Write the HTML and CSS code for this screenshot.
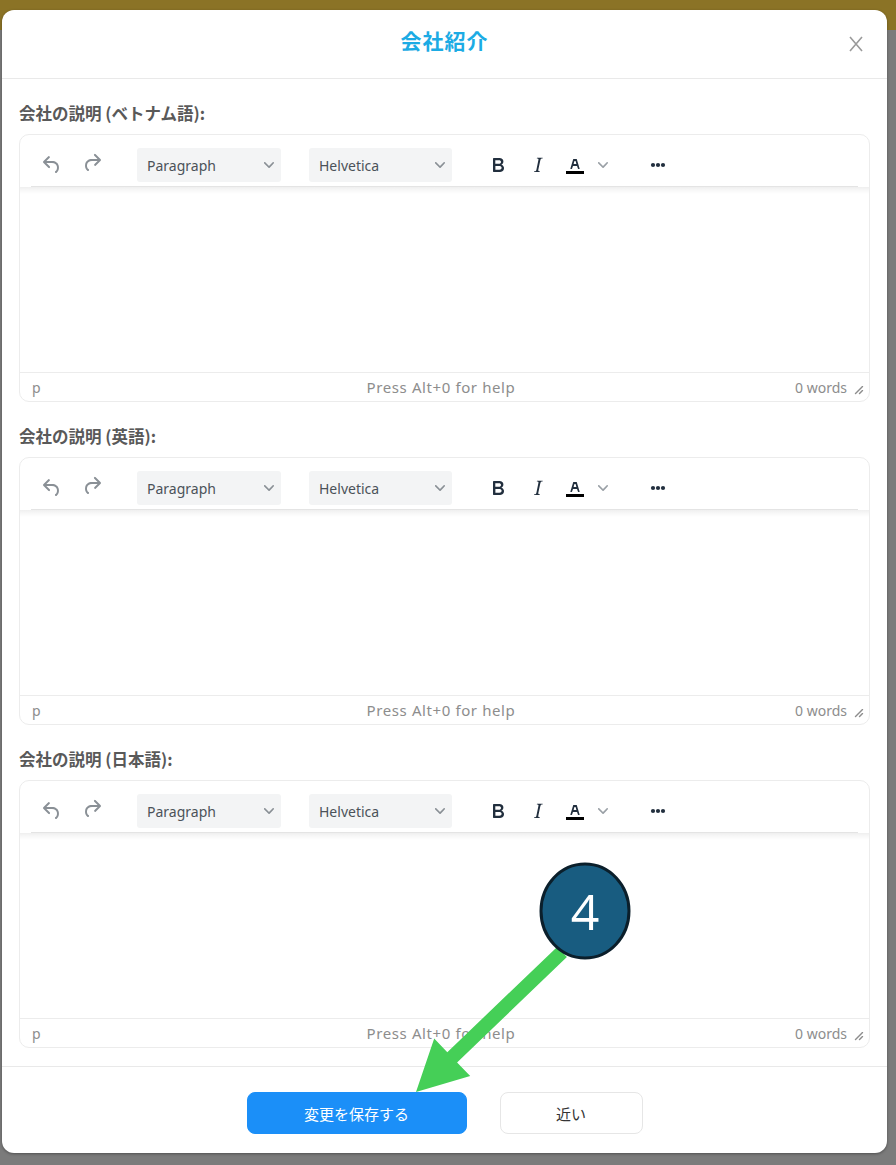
FILE: index.html
```html
<!DOCTYPE html>
<html lang="ja">
<head>
<meta charset="utf-8">
<title>会社紹介</title>
<link rel="stylesheet" href="styles.css">
</head>
<body>
<div class="modal">
  <div class="modal-header">
    <h2 class="modal-title">会社紹介</h2>
    <button class="modal-close" aria-label="close">
      <svg width="14" height="16" viewBox="0 0 14 16"><path d="M1 1 13 15M13 1 1 15" stroke="#9a9a9a" stroke-width="1.6" fill="none"/></svg>
    </button>
  </div>

  <div class="modal-body">
    <section class="field">
      <label class="field-label">会社の説明 (ベトナム語):</label>
      <div class="editor">
        <div class="toolbar">
          <span class="tb-btn muted"><svg width="24" height="24" viewBox="0 0 24 24"><path d="M6.4 8H12c3.7 0 6.2 2 6.8 5.1.6 2.7-.4 5.6-2.3 6.8a1 1 0 0 1-1-1.8c1.1-.6 1.8-2.7 1.4-4.6-.5-2.1-2.1-3.5-4.9-3.5H6.4l3.3 3.3a1 1 0 1 1-1.4 1.4l-5-5a1 1 0 0 1 0-1.4l5-5a1 1 0 0 1 1.4 1.4L6.4 8z"/></svg></span>
          <span class="tb-btn muted"><svg width="24" height="24" viewBox="0 0 24 24"><path d="M17.6 10H12c-2.8 0-4.4 1.4-4.9 3.5-.4 2 .3 4 1.4 4.6a1 1 0 1 1-1 1.8c-2-1.2-2.9-4.1-2.3-6.8.6-3 3-5.1 6.8-5.1h5.6l-3.3-3.3a1 1 0 1 1 1.4-1.4l5 5a1 1 0 0 1 0 1.4l-5 5a1 1 0 0 1-1.4-1.4l3.3-3.3z" transform="translate(0 -2)"/></svg></span>
          <span class="tb-select sel-first">Paragraph<svg class="chev" width="10" height="10" viewBox="0 0 10 10"><path d="M8.7 2.2c.3-.3.8-.3 1 0 .4.4.4.9 0 1.2L5.7 7.8c-.3.3-.9.3-1.2 0L.2 3.4a.8.8 0 0 1 0-1.2c.3-.3.8-.3 1.1 0L5 6l3.7-3.8z"/></svg></span>
          <span class="tb-select sel-second">Helvetica<svg class="chev" width="10" height="10" viewBox="0 0 10 10"><path d="M8.7 2.2c.3-.3.8-.3 1 0 .4.4.4.9 0 1.2L5.7 7.8c-.3.3-.9.3-1.2 0L.2 3.4a.8.8 0 0 1 0-1.2c.3-.3.8-.3 1.1 0L5 6l3.7-3.8z"/></svg></span>
          <span class="tb-btn grp-start"><svg width="24" height="24" viewBox="0 0 24 24"><path d="M7.8 19c-.3 0-.5 0-.6-.2l-.2-.5V5.7c0-.2 0-.4.2-.5l.6-.2h5c1.5 0 2.7.3 3.5 1 .7.6 1.1 1.4 1.1 2.5a3 3 0 0 1-.6 1.9c-.4.6-1 1-1.6 1.2.4.1.9.3 1.3.6s.8.7 1 1.2c.4.4.5 1 .5 1.6 0 1.3-.4 2.3-1.3 3-.8.7-2.1 1-3.8 1H7.8zm5-8.3c.6 0 1.2-.1 1.6-.5.4-.3.6-.7.6-1.3 0-1.1-.8-1.7-2.3-1.7H9.3v3.5h3.4zm.5 6c.7 0 1.3-.1 1.7-.4.4-.4.6-.9.6-1.5s-.2-1-.7-1.4c-.4-.3-1-.4-2-.4H9.4v3.8h4z" fill-rule="evenodd"/></svg></span>
          <span class="tb-btn"><svg width="24" height="24" viewBox="0 0 24 24"><path d="M16.7 4.7l-.1.9h-.3c-.6 0-1 0-1.4.3-.3.3-.4.6-.5 1.1l-2.1 9.8v.6c0 .5.4.8 1.4.8h.2l-.2.8H8l.2-.8h.2c1.1 0 1.8-.5 2-1.5l2-9.8.1-.5c0-.6-.4-.8-1.4-.8h-.3l.2-.9h5.8z" fill-rule="evenodd"/></svg></span>
          <span class="tb-split">
            <span class="tb-btn"><svg width="24" height="24" viewBox="0 0 24 24"><path d="M3 18h18v3H3z" fill="#000"/><path d="M8.7 16h-.8a.5.5 0 0 1-.5-.6l2.7-9c.1-.3.3-.4.5-.4h2.8c.2 0 .4.1.5.4l2.7 9a.5.5 0 0 1-.5.6h-.8a.5.5 0 0 1-.4-.4l-.7-2.2c0-.3-.3-.4-.5-.4h-3.4c-.2 0-.4.1-.5.4l-.7 2.2c0 .3-.2.4-.4.4zm2.6-7.6l-.6 2a.5.5 0 0 0 .5.6h1.6a.5.5 0 0 0 .5-.6l-.6-2c0-.3-.3-.4-.5-.4h-.4c-.2 0-.4.1-.5.4z" fill-rule="evenodd"/></svg></span>
            <span class="tb-chev"><svg class="chev" width="10" height="10" viewBox="0 0 10 10"><path d="M8.7 2.2c.3-.3.8-.3 1 0 .4.4.4.9 0 1.2L5.7 7.8c-.3.3-.9.3-1.2 0L.2 3.4a.8.8 0 0 1 0-1.2c.3-.3.8-.3 1.1 0L5 6l3.7-3.8z"/></svg></span>
          </span>
          <span class="tb-btn grp-more"><svg width="24" height="24" viewBox="0 0 24 24"><circle cx="7" cy="12" r="2.1"/><circle cx="12" cy="12" r="2.1"/><circle cx="17" cy="12" r="2.1"/></svg></span>
        </div>
        <div class="toolbar-rule"></div>
        <div class="edit-area"></div>
        <div class="statusbar">
          <span class="sb-path">p</span>
          <span class="sb-help">Press Alt+0 for help</span>
          <span class="sb-right">0 words<svg class="resize" width="10" height="10" viewBox="0 0 10 10"><path d="M8.1 1.1A.5.5 0 1 1 9 2l-7 7A.5.5 0 1 1 1 8l7-7zM8.1 5.1A.5.5 0 1 1 9 6l-3 3A.5.5 0 1 1 5 8l3-3z"/></svg></span>
        </div>
      </div>
    </section>

    <section class="field">
      <label class="field-label">会社の説明 (英語):</label>
      <div class="editor">
        <div class="toolbar">
          <span class="tb-btn muted"><svg width="24" height="24" viewBox="0 0 24 24"><path d="M6.4 8H12c3.7 0 6.2 2 6.8 5.1.6 2.7-.4 5.6-2.3 6.8a1 1 0 0 1-1-1.8c1.1-.6 1.8-2.7 1.4-4.6-.5-2.1-2.1-3.5-4.9-3.5H6.4l3.3 3.3a1 1 0 1 1-1.4 1.4l-5-5a1 1 0 0 1 0-1.4l5-5a1 1 0 0 1 1.4 1.4L6.4 8z"/></svg></span>
          <span class="tb-btn muted"><svg width="24" height="24" viewBox="0 0 24 24"><path d="M17.6 10H12c-2.8 0-4.4 1.4-4.9 3.5-.4 2 .3 4 1.4 4.6a1 1 0 1 1-1 1.8c-2-1.2-2.9-4.1-2.3-6.8.6-3 3-5.1 6.8-5.1h5.6l-3.3-3.3a1 1 0 1 1 1.4-1.4l5 5a1 1 0 0 1 0 1.4l-5 5a1 1 0 0 1-1.4-1.4l3.3-3.3z" transform="translate(0 -2)"/></svg></span>
          <span class="tb-select sel-first">Paragraph<svg class="chev" width="10" height="10" viewBox="0 0 10 10"><path d="M8.7 2.2c.3-.3.8-.3 1 0 .4.4.4.9 0 1.2L5.7 7.8c-.3.3-.9.3-1.2 0L.2 3.4a.8.8 0 0 1 0-1.2c.3-.3.8-.3 1.1 0L5 6l3.7-3.8z"/></svg></span>
          <span class="tb-select sel-second">Helvetica<svg class="chev" width="10" height="10" viewBox="0 0 10 10"><path d="M8.7 2.2c.3-.3.8-.3 1 0 .4.4.4.9 0 1.2L5.7 7.8c-.3.3-.9.3-1.2 0L.2 3.4a.8.8 0 0 1 0-1.2c.3-.3.8-.3 1.1 0L5 6l3.7-3.8z"/></svg></span>
          <span class="tb-btn grp-start"><svg width="24" height="24" viewBox="0 0 24 24"><path d="M7.8 19c-.3 0-.5 0-.6-.2l-.2-.5V5.7c0-.2 0-.4.2-.5l.6-.2h5c1.5 0 2.7.3 3.5 1 .7.6 1.1 1.4 1.1 2.5a3 3 0 0 1-.6 1.9c-.4.6-1 1-1.6 1.2.4.1.9.3 1.3.6s.8.7 1 1.2c.4.4.5 1 .5 1.6 0 1.3-.4 2.3-1.3 3-.8.7-2.1 1-3.8 1H7.8zm5-8.3c.6 0 1.2-.1 1.6-.5.4-.3.6-.7.6-1.3 0-1.1-.8-1.7-2.3-1.7H9.3v3.5h3.4zm.5 6c.7 0 1.3-.1 1.7-.4.4-.4.6-.9.6-1.5s-.2-1-.7-1.4c-.4-.3-1-.4-2-.4H9.4v3.8h4z" fill-rule="evenodd"/></svg></span>
          <span class="tb-btn"><svg width="24" height="24" viewBox="0 0 24 24"><path d="M16.7 4.7l-.1.9h-.3c-.6 0-1 0-1.4.3-.3.3-.4.6-.5 1.1l-2.1 9.8v.6c0 .5.4.8 1.4.8h.2l-.2.8H8l.2-.8h.2c1.1 0 1.8-.5 2-1.5l2-9.8.1-.5c0-.6-.4-.8-1.4-.8h-.3l.2-.9h5.8z" fill-rule="evenodd"/></svg></span>
          <span class="tb-split">
            <span class="tb-btn"><svg width="24" height="24" viewBox="0 0 24 24"><path d="M3 18h18v3H3z" fill="#000"/><path d="M8.7 16h-.8a.5.5 0 0 1-.5-.6l2.7-9c.1-.3.3-.4.5-.4h2.8c.2 0 .4.1.5.4l2.7 9a.5.5 0 0 1-.5.6h-.8a.5.5 0 0 1-.4-.4l-.7-2.2c0-.3-.3-.4-.5-.4h-3.4c-.2 0-.4.1-.5.4l-.7 2.2c0 .3-.2.4-.4.4zm2.6-7.6l-.6 2a.5.5 0 0 0 .5.6h1.6a.5.5 0 0 0 .5-.6l-.6-2c0-.3-.3-.4-.5-.4h-.4c-.2 0-.4.1-.5.4z" fill-rule="evenodd"/></svg></span>
            <span class="tb-chev"><svg class="chev" width="10" height="10" viewBox="0 0 10 10"><path d="M8.7 2.2c.3-.3.8-.3 1 0 .4.4.4.9 0 1.2L5.7 7.8c-.3.3-.9.3-1.2 0L.2 3.4a.8.8 0 0 1 0-1.2c.3-.3.8-.3 1.1 0L5 6l3.7-3.8z"/></svg></span>
          </span>
          <span class="tb-btn grp-more"><svg width="24" height="24" viewBox="0 0 24 24"><circle cx="7" cy="12" r="2.1"/><circle cx="12" cy="12" r="2.1"/><circle cx="17" cy="12" r="2.1"/></svg></span>
        </div>
        <div class="toolbar-rule"></div>
        <div class="edit-area"></div>
        <div class="statusbar">
          <span class="sb-path">p</span>
          <span class="sb-help">Press Alt+0 for help</span>
          <span class="sb-right">0 words<svg class="resize" width="10" height="10" viewBox="0 0 10 10"><path d="M8.1 1.1A.5.5 0 1 1 9 2l-7 7A.5.5 0 1 1 1 8l7-7zM8.1 5.1A.5.5 0 1 1 9 6l-3 3A.5.5 0 1 1 5 8l3-3z"/></svg></span>
        </div>
      </div>
    </section>

    <section class="field">
      <label class="field-label">会社の説明 (日本語):</label>
      <div class="editor">
        <div class="toolbar">
          <span class="tb-btn muted"><svg width="24" height="24" viewBox="0 0 24 24"><path d="M6.4 8H12c3.7 0 6.2 2 6.8 5.1.6 2.7-.4 5.6-2.3 6.8a1 1 0 0 1-1-1.8c1.1-.6 1.8-2.7 1.4-4.6-.5-2.1-2.1-3.5-4.9-3.5H6.4l3.3 3.3a1 1 0 1 1-1.4 1.4l-5-5a1 1 0 0 1 0-1.4l5-5a1 1 0 0 1 1.4 1.4L6.4 8z"/></svg></span>
          <span class="tb-btn muted"><svg width="24" height="24" viewBox="0 0 24 24"><path d="M17.6 10H12c-2.8 0-4.4 1.4-4.9 3.5-.4 2 .3 4 1.4 4.6a1 1 0 1 1-1 1.8c-2-1.2-2.9-4.1-2.3-6.8.6-3 3-5.1 6.8-5.1h5.6l-3.3-3.3a1 1 0 1 1 1.4-1.4l5 5a1 1 0 0 1 0 1.4l-5 5a1 1 0 0 1-1.4-1.4l3.3-3.3z" transform="translate(0 -2)"/></svg></span>
          <span class="tb-select sel-first">Paragraph<svg class="chev" width="10" height="10" viewBox="0 0 10 10"><path d="M8.7 2.2c.3-.3.8-.3 1 0 .4.4.4.9 0 1.2L5.7 7.8c-.3.3-.9.3-1.2 0L.2 3.4a.8.8 0 0 1 0-1.2c.3-.3.8-.3 1.1 0L5 6l3.7-3.8z"/></svg></span>
          <span class="tb-select sel-second">Helvetica<svg class="chev" width="10" height="10" viewBox="0 0 10 10"><path d="M8.7 2.2c.3-.3.8-.3 1 0 .4.4.4.9 0 1.2L5.7 7.8c-.3.3-.9.3-1.2 0L.2 3.4a.8.8 0 0 1 0-1.2c.3-.3.8-.3 1.1 0L5 6l3.7-3.8z"/></svg></span>
          <span class="tb-btn grp-start"><svg width="24" height="24" viewBox="0 0 24 24"><path d="M7.8 19c-.3 0-.5 0-.6-.2l-.2-.5V5.7c0-.2 0-.4.2-.5l.6-.2h5c1.5 0 2.7.3 3.5 1 .7.6 1.1 1.4 1.1 2.5a3 3 0 0 1-.6 1.9c-.4.6-1 1-1.6 1.2.4.1.9.3 1.3.6s.8.7 1 1.2c.4.4.5 1 .5 1.6 0 1.3-.4 2.3-1.3 3-.8.7-2.1 1-3.8 1H7.8zm5-8.3c.6 0 1.2-.1 1.6-.5.4-.3.6-.7.6-1.3 0-1.1-.8-1.7-2.3-1.7H9.3v3.5h3.4zm.5 6c.7 0 1.3-.1 1.7-.4.4-.4.6-.9.6-1.5s-.2-1-.7-1.4c-.4-.3-1-.4-2-.4H9.4v3.8h4z" fill-rule="evenodd"/></svg></span>
          <span class="tb-btn"><svg width="24" height="24" viewBox="0 0 24 24"><path d="M16.7 4.7l-.1.9h-.3c-.6 0-1 0-1.4.3-.3.3-.4.6-.5 1.1l-2.1 9.8v.6c0 .5.4.8 1.4.8h.2l-.2.8H8l.2-.8h.2c1.1 0 1.8-.5 2-1.5l2-9.8.1-.5c0-.6-.4-.8-1.4-.8h-.3l.2-.9h5.8z" fill-rule="evenodd"/></svg></span>
          <span class="tb-split">
            <span class="tb-btn"><svg width="24" height="24" viewBox="0 0 24 24"><path d="M3 18h18v3H3z" fill="#000"/><path d="M8.7 16h-.8a.5.5 0 0 1-.5-.6l2.7-9c.1-.3.3-.4.5-.4h2.8c.2 0 .4.1.5.4l2.7 9a.5.5 0 0 1-.5.6h-.8a.5.5 0 0 1-.4-.4l-.7-2.2c0-.3-.3-.4-.5-.4h-3.4c-.2 0-.4.1-.5.4l-.7 2.2c0 .3-.2.4-.4.4zm2.6-7.6l-.6 2a.5.5 0 0 0 .5.6h1.6a.5.5 0 0 0 .5-.6l-.6-2c0-.3-.3-.4-.5-.4h-.4c-.2 0-.4.1-.5.4z" fill-rule="evenodd"/></svg></span>
            <span class="tb-chev"><svg class="chev" width="10" height="10" viewBox="0 0 10 10"><path d="M8.7 2.2c.3-.3.8-.3 1 0 .4.4.4.9 0 1.2L5.7 7.8c-.3.3-.9.3-1.2 0L.2 3.4a.8.8 0 0 1 0-1.2c.3-.3.8-.3 1.1 0L5 6l3.7-3.8z"/></svg></span>
          </span>
          <span class="tb-btn grp-more"><svg width="24" height="24" viewBox="0 0 24 24"><circle cx="7" cy="12" r="2.1"/><circle cx="12" cy="12" r="2.1"/><circle cx="17" cy="12" r="2.1"/></svg></span>
        </div>
        <div class="toolbar-rule"></div>
        <div class="edit-area"></div>
        <div class="statusbar">
          <span class="sb-path">p</span>
          <span class="sb-help">Press Alt+0 for help</span>
          <span class="sb-right">0 words<svg class="resize" width="10" height="10" viewBox="0 0 10 10"><path d="M8.1 1.1A.5.5 0 1 1 9 2l-7 7A.5.5 0 1 1 1 8l7-7zM8.1 5.1A.5.5 0 1 1 9 6l-3 3A.5.5 0 1 1 5 8l3-3z"/></svg></span>
        </div>
      </div>
    </section>
  </div>

  <div class="modal-footer">
    <button class="btn btn-primary">変更を保存する</button>
    <button class="btn btn-default">近い</button>
  </div>
</div>

<svg class="annotation" width="896" height="1165" viewBox="0 0 896 1165">
  <polygon points="557.1,946.9 566.9,957.1 457.1,1062.4 470.2,1076.1 416,1092 434.2,1038.5 447.3,1052.2" fill="#45cf57"/>
  <ellipse cx="585" cy="911" rx="44" ry="47" fill="#185c80" stroke="#0b1f2b" stroke-width="3"/>
  <text x="585" y="930" text-anchor="middle" class="callout-num">4</text>
</svg>
</body>
</html>
```

FILE: styles.css
```css
* { box-sizing: border-box; }

html, body {
  margin: 0;
  padding: 0;
}

body {
  width: 896px;
  height: 1165px;
  overflow: hidden;
  position: relative;
  background: linear-gradient(#8b7326 0, #8b7326 30px, #7b7b7b 30px, #7b7b7b 100%);
  font-family: "Noto Sans", "Noto Sans CJK JP", sans-serif;
}

.modal {
  margin: 10px 0 0 2px;
  width: 885px;
  height: 1143px;
  background: #fff;
  border-radius: 12px;
  box-shadow: 0 1px 3px rgba(0, 0, 0, 0.35);
  display: flex;
  flex-direction: column;
}

.modal-header {
  height: 69px;
  border-bottom: 1.5px solid #e9e9e9;
  display: flex;
  align-items: center;
  justify-content: center;
  position: relative;
  flex: none;
}

.modal-title {
  margin: 0 0 8px;
  font-family: "Noto Sans CJK JP", sans-serif;
  font-weight: 700;
  font-size: 21px;
  color: #1cabe4;
  letter-spacing: 1px;
}

.modal-close {
  position: absolute;
  right: 24px;
  top: 26px;
  border: 0;
  background: none;
  padding: 0;
  width: 14px;
  height: 16px;
  display: flex;
}

.modal-body {
  padding: 22px 17px 18px;
  display: flex;
  flex-direction: column;
  gap: 22px;
  border-bottom: 1.5px solid #e9e9e9;
  flex: none;
}

.field {
  display: flex;
  flex-direction: column;
  gap: 9px;
}

.field-label {
  font-family: "Noto Sans CJK JP", sans-serif;
  font-weight: 700;
  font-size: 16.5px;
  line-height: 24px;
  color: #595959;
}

.editor {
  height: 268px;
  border: 1.5px solid #ececec;
  border-radius: 10px;
  display: flex;
  flex-direction: column;
  overflow: hidden;
}

.toolbar {
  display: flex;
  align-items: center;
  padding: 13px 12px 4px;
  height: 51px;
  flex: none;
}

.tb-btn {
  width: 40px;
  height: 34px;
  display: flex;
  align-items: center;
  justify-content: center;
  fill: #222f3e;
  flex: none;
}

.tb-btn.muted { fill: #8a9096; }

.tb-select {
  height: 34px;
  background: #f3f4f5;
  border-radius: 3px;
  display: flex;
  align-items: center;
  justify-content: space-between;
  padding: 0 7px 0 10px;
  font-size: 14px;
  color: #4b5259;
  flex: none;
}

.tb-select .chev { fill: #8a9096; }

.sel-first { width: 144px; margin-left: 25px; }
.sel-second { width: 143px; margin-left: 28px; }

.grp-start { margin-left: 26px; }
.grp-more { margin-left: 27px; }

.tb-split { display: flex; align-items: center; margin-left: -3px; }

.tb-chev {
  width: 16px;
  height: 34px;
  display: flex;
  align-items: center;
  justify-content: center;
  fill: #9aa0a6;
}

.toolbar-rule {
  height: 1px;
  margin: 0 11px;
  background: #e4e4e4;
  flex: none;
}

.edit-area {
  flex: 1;
  background: linear-gradient(#efefef 0, #f7f7f7 3px, #ffffff 7px);
}

.statusbar {
  height: 29px;
  border-top: 1.5px solid #ececec;
  display: grid;
  grid-template-columns: 1fr auto 1fr;
  align-items: center;
  padding: 0 5px 0 12px;
  font-size: 14px;
  color: #8d8d8d;
  flex: none;
}

.sb-help {
  margin-right: 14px;
  font-size: 15px;
  letter-spacing: 0.6px;
}

.sb-right {
  justify-self: end;
  display: flex;
  align-items: center;
  gap: 7px;
}

.resize { fill: #8d8d8d; margin-top: 6px; }

.modal-footer {
  flex: 1;
  display: flex;
  justify-content: center;
  align-items: flex-start;
  gap: 33px;
  padding-top: 25px;
}

.btn {
  height: 42px;
  border-radius: 8px;
  font-family: "Noto Sans CJK JP", sans-serif;
  font-size: 15px;
  cursor: pointer;
}

.btn-primary {
  width: 220px;
  background: #1b8ff8;
  border: 1px solid #1b8ff8;
  color: #fff;
}

.btn-default {
  width: 143px;
  background: #fff;
  border: 1.5px solid #e6e6e6;
  color: #333;
}

.annotation {
  position: absolute;
  left: 0;
  top: 0;
  pointer-events: none;
}

.callout-num {
  font-family: "Open Sans", "Noto Sans", sans-serif;
  font-size: 50px;
  fill: #ffffff;
}
```
